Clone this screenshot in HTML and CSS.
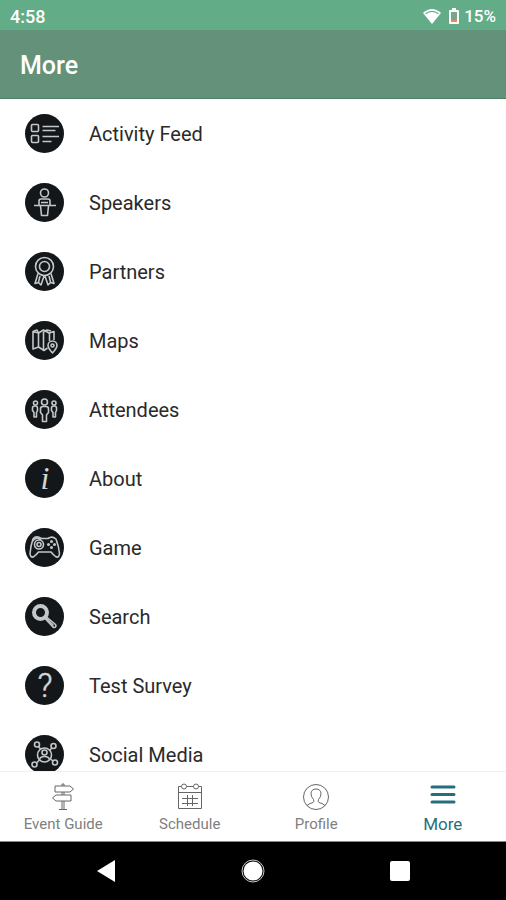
FILE: index.html
```
<!DOCTYPE html>
<html lang="en">
<head>
    <meta charset="UTF-8">
    <meta name="viewport" content="width=device-width, initial-scale=1.0">
    <title>More</title>
    <link rel="stylesheet" href="styles.css">
</head>
<body>
    <div class="status-bar">
        <span class="time">4:58</span>
        <div class="status-right">
            <svg class="wifi" width="20" height="16" viewBox="0 0 20 16">
                <path d="M1 5Q10 -3 19 5L10 16Z" fill="#fff"/>
                <path d="M3.5 5.8Q10 1 16.5 5.8" fill="none" stroke="#62ad88" stroke-width="1.2"/>
            </svg>
            <svg class="battery" width="12" height="17" viewBox="0 0 12 17">
                <path d="M4 0H8V2H10Q11 2 11 3V15Q11 16 10 16H2Q1 16 1 15V3Q1 2 2 2H4Z" fill="#fff"/>
                <path d="M3 4H9V12H3Z" fill="#76a78e"/>
                <path d="M3 12H9V14H3Z" fill="#f0845c"/>
            </svg>
            <span>15%</span>
        </div>
    </div>

    <header class="header">
        <h1>More</h1>
    </header>

    <main class="content">
        <ul class="menu">
            <li>
                <a class="menu-item" href="#activity">
                    <svg class="menu-icon" viewBox="0 0 39 39">
                        <rect x="6.5" y="10.5" width="7" height="7" rx="1"/>
                        <rect x="6.5" y="21.5" width="7" height="7" rx="1"/>
                        <path d="M17.5 12.5H34M17.5 16.5H30.5M17.5 22.5H34M17.5 27.5H26.5"/>
                    </svg>
                    Activity Feed
                </a>
            </li>
            <li>
                <a class="menu-item" href="#speakers">
                    <svg class="menu-icon" viewBox="0 0 39 39">
                        <circle cx="19.5" cy="10" r="4"/>
                        <path d="M14 22.5V18Q14 16 16 16H23Q25 16 25 18V22.5M9 22.5H31"/>
                        <path d="M16 19.5H23M15.5 23L16.5 32.5H22.5L23.5 23"/>
                    </svg>
                    Speakers
                </a>
            </li>
            <li>
                <a class="menu-item" href="#partners">
                    <svg class="menu-icon" viewBox="0 0 39 39">
                        <circle cx="19.5" cy="14.5" r="9"/>
                        <circle cx="19.5" cy="14.5" r="5"/>
                        <path d="M13 21.5L10 31.5L13.5 30.5L16 33L19 24M26 21.5L29 31.5L25.5 30.5L23 33L20 24M15 24L13.5 30M24 24L25.5 30"/>
                    </svg>
                    Partners
                </a>
            </li>
            <li>
                <a class="menu-item" href="#maps">
                    <svg class="menu-icon" viewBox="0 0 39 39">
                        <path d="M22.5 27L19 29.5L13.5 26L8 28V10.500L13.5 12L18.5 9L24 12L29 10.5V19"/>
                        <path d="M8 10.5L12 9L13.5 12V26M18.5 11V29M18.5 11L22 9L26 10M24.5 12V20"/>
                        <path d="M27.5 32Q23 27 23 24.5A4.5 4.5 0 0 1 32 24.5Q32 27 27.5 32Z"/>
                        <circle cx="27.5" cy="24.5" r="1.5"/>
                    </svg>
                    Maps
                </a>
            </li>
            <li>
                <a class="menu-item" href="#attendees">
                    <svg class="menu-icon" viewBox="0 0 39 39">
                        <circle cx="19.5" cy="12" r="3"/>
                        <path d="M17.5 31.5V25L15.5 22.5V19Q15.5 16.5 18 16.5H21Q23.5 16.5 23.5 19V22.5L21.5 25V31.5Z"/>
                        <circle cx="10.5" cy="13" r="2"/>
                        <path d="M9 27V22.5L7.5 20.5V18Q7.5 16 10 16Q12.5 16 12.5 18V20.5L11.5 22.5V27Z"/>
                        <circle cx="29" cy="13" r="2"/>
                        <path d="M28 27V22.5L26.5 20.5V18Q26.5 16 29 16Q31.5 16 31.5 18V20.5L30.5 22.5V27Z"/>
                    </svg>
                    Attendees
                </a>
            </li>
            <li>
                <a class="menu-item" href="#about">
                    <svg class="menu-icon" viewBox="0 0 39 39">
                        <text class="info-mark" x="20" y="30">i</text>
                    </svg>
                    About
                </a>
            </li>
            <li>
                <a class="menu-item" href="#game">
                    <svg class="menu-icon" viewBox="0 0 39 39">
                        <path d="M8 11Q11 7 16.5 10.500H23Q27 7.5 31 11Q34 19 34.5 25.5Q34 30.5 30.5 28.500Q28 26.5 26 24H13.5Q11.5 26.5 9 28.5Q5.5 30.5 5 25.5Q5.5 18 8 11Z"/>
                        <circle cx="14" cy="16.5" r="4.5"/>
                        <circle cx="14" cy="16.5" r="2"/>
                        <path d="M7.500 13Q12 8 16 12"/>
                        <g class="solid">
                            <circle cx="26.5" cy="13.5" r="1.5"/>
                            <circle cx="26.5" cy="19.5" r="1.5"/>
                            <circle cx="23.5" cy="16.5" r="1.5"/>
                            <circle cx="29.5" cy="16.5" r="1.5"/>
                        </g>
                    </svg>
                    Game
                </a>
            </li>
            <li>
                <a class="menu-item" href="#search">
                    <svg class="menu-icon" viewBox="0 0 39 39">
                        <circle class="bold" cx="15.5" cy="15.5" r="6.5"/>
                        <path d="M20 21.5L28 30Q29.5 31 30.5 30Q31.5 29 30.5 27.5L21.5 20"/>
                        <path d="M20.5 20.5L28.5 28.5"/>
                    </svg>
                    Search
                </a>
            </li>
            <li>
                <a class="menu-item" href="#survey">
                    <svg class="menu-icon" viewBox="0 0 39 39">
                        <text class="question-mark" x="20" y="31">?</text>
                    </svg>
                    Test Survey
                </a>
            </li>
            <li>
                <a class="menu-item" href="#social">
                    <svg class="menu-icon" viewBox="0 0 39 39">
                        <circle cx="19.5" cy="20" r="7"/>
                        <circle cx="19.5" cy="17.5" r="2.5"/>
                        <path d="M14.5 25Q15 21.5 19.5 21.5Q24 21.5 24.5 25"/>
                        <circle cx="12" cy="9.5" r="2.5"/>
                        <circle cx="28.5" cy="11" r="2.5"/>
                        <circle cx="9.5" cy="29.5" r="2.5"/>
                        <circle cx="30" cy="27.5" r="2.5"/>
                        <path d="M13.5 11.5L15.5 14M27 13L24.5 15.5M11.5 28L14.5 25M28 26L25.5 24"/>
                    </svg>
                    Social Media
                </a>
            </li>
        </ul>
    </main>

    <nav class="tabs">
        <a class="tab" href="#guide">
            <svg width="28" height="28" viewBox="0 0 28 28">
                <path d="M6 3H21L24.5 6L21 9H6ZM22 12H7L3.5 15L7 18H22ZM13 3V1H15V3M13 9V12M15 9V12M13 18V26M15 18V26M10 26.5H18"/>
            </svg>
            <span>Event Guide</span>
        </a>
        <a class="tab" href="#schedule">
            <svg width="28" height="28" viewBox="0 0 28 28">
                <path d="M5.5 3.5H2.5V25.5H25.5V3.5H22.5M10.5 3.5H17.5M2.5 9.5H25.5M6 15.5H22M6 20.5H22M11.5 12V23M16.5 12V23"/>
                <circle cx="8" cy="3.5" r="2.5"/>
                <circle cx="20" cy="3.5" r="2.5"/>
            </svg>
            <span>Schedule</span>
        </a>
        <a class="tab" href="#profile">
            <svg width="28" height="28" viewBox="0 0 28 28">
                <circle cx="14" cy="14" r="12.5"/>
                <path d="M5 22.5Q7 20.5 11 19.5Q12.5 18.5 11.5 16.5Q9 14 9 10.5Q9.5 6 14 6Q18.5 6 19 10.5Q19 14 16.5 16.5Q15.5 18.5 17 19.5Q21 20.5 23 22.5"/>
            </svg>
            <span>Profile</span>
        </a>
        <a class="tab active" href="#more" aria-current="page">
            <svg width="28" height="28" viewBox="0 0 28 28">
                <path d="M3 4H25M3 11.5H25M3 19H25"/>
            </svg>
            <span>More</span>
        </a>
    </nav>

    <div class="system-nav">
        <button aria-label="Back">
            <svg width="24" height="24" viewBox="0 0 24 24"><path d="M21 1V23L3 12Z"/></svg>
        </button>
        <button aria-label="Home">
            <svg width="24" height="24" viewBox="0 0 24 24">
                <circle cx="12" cy="12" r="9.5"/>
                <circle class="ring" cx="12" cy="12" r="11"/>
            </svg>
        </button>
        <button aria-label="Recent apps">
            <svg width="24" height="24" viewBox="0 0 24 24"><rect x="2" y="2" width="20" height="20" rx="2"/></svg>
        </button>
    </div>
</body>
</html>
```
FILE: styles.css
```
* {
    box-sizing: border-box;
}
body {
    margin: 0;
    height: 100vh;
    display: flex;
    flex-direction: column;
    font-family: Roboto, sans-serif;
    background-color: #fff;
    color: #2a2a2a;
}
a {
    color: inherit;
    text-decoration: none;
}

.status-bar {
    display: flex;
    justify-content: space-between;
    align-items: center;
    height: 30px;
    padding: 2px 10px 0;
    background-color: #62ad88;
    color: #fff;
    font-size: 17px;
    font-weight: 500;
}
.time {
    font-size: 18px;
}
.status-right {
    display: flex;
    align-items: center;
}
.wifi {
    margin-right: 6px;
}
.battery {
    margin-right: 4px;
}

.header {
    display: flex;
    align-items: center;
    height: 69px;
    padding: 2px 20px 0;
    background-color: #63917a;
    border-bottom: 1px solid #4a8066;
    color: #fff;
}
.header h1 {
    margin: 0;
    font-size: 25px;
    font-weight: 500;
}

.content {
    flex: 1;
    min-height: 0;
    overflow-y: auto;
    scrollbar-width: none;
}
.menu {
    margin: 0;
    padding: 0;
    list-style: none;
}
.menu-item {
    display: flex;
    align-items: center;
    gap: 25px;
    height: 69px;
    padding: 0 25px;
    font-size: 20px;
}
.menu-icon {
    width: 39px;
    height: 39px;
    border-radius: 50%;
    background-color: #13171a;
    fill: none;
    stroke: #c4c6c7;
    stroke-width: 1.6;
    stroke-linejoin: round;
}
.menu-icon .solid {
    fill: #c4c6c7;
    stroke: none;
}
.menu-icon .bold {
    stroke-width: 4;
}
.menu-icon text {
    fill: #d4d6d7;
    stroke: none;
    text-anchor: middle;
}
.info-mark {
    font: italic 32px "Liberation Serif", serif;
}
.question-mark {
    font: 300 33px Roboto, sans-serif;
}
.menu-icon .question-mark {
    stroke: #d4d6d7;
    stroke-width: 0.5;
}

.tabs {
    display: grid;
    grid-template-columns: repeat(4, 1fr);
    height: 71px;
    border-top: 1px solid #f0f0f0;
    border-bottom: 1px solid #888;
}
.tab {
    display: flex;
    flex-direction: column;
    align-items: center;
    gap: 3px;
    padding-top: 11px;
    color: #808080;
    font-size: 15px;
    line-height: 20px;
}
.tab svg {
    fill: none;
    stroke: #666;
    stroke-width: 1;
}
.tab.active {
    color: #256f7c;
    font-size: 17px;
}
.tab.active svg {
    stroke: #256f7c;
    stroke-width: 3;
    stroke-linecap: round;
}

.system-nav {
    display: grid;
    grid-template-columns: repeat(3, 1fr);
    height: 58px;
    padding: 0 33px;
    background-color: #000;
}
.system-nav button {
    display: flex;
    align-items: center;
    justify-content: center;
    padding: 0;
    border: none;
    background: none;
    cursor: pointer;
}
.system-nav svg {
    fill: #fff;
}
.system-nav .ring {
    fill: none;
    stroke: #ccc;
}
```
